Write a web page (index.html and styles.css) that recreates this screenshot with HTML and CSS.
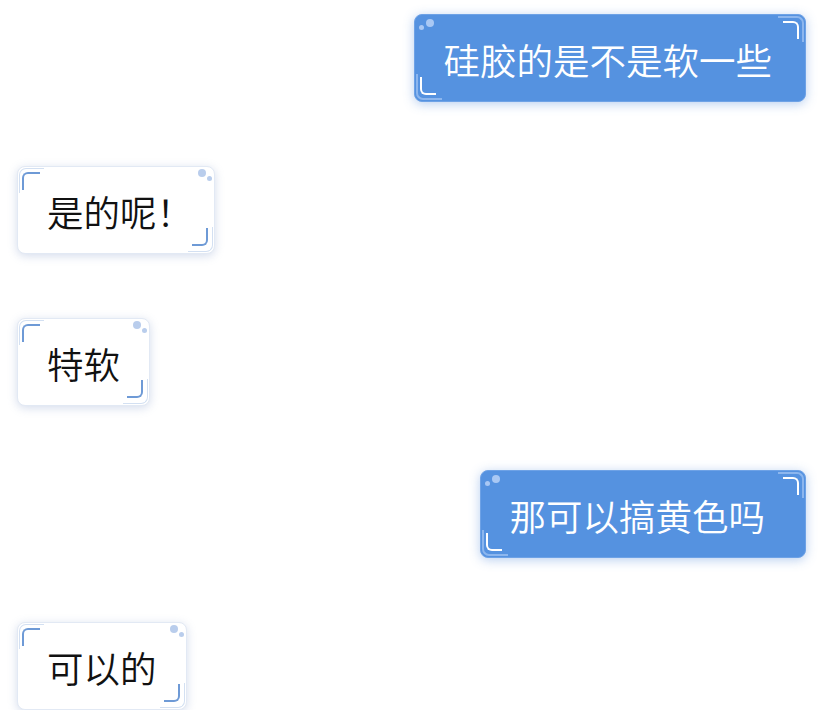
FILE: index.html
```html
<!DOCTYPE html>
<html lang="zh-CN">
<head>
<meta charset="utf-8">
<link rel="stylesheet" href="styles.css">
</head>
<body>
<div class="chat">
  <div class="bubble me long"><span class="txt">硅胶的是不是软一些</span><i class="dot big"></i><i class="dot small"></i><i class="br a"></i><i class="br b"></i><i class="ln a"></i><i class="ln b"></i></div>
  <div class="bubble them tight"><span class="txt">是的呢！</span><i class="dot big"></i><i class="dot small"></i><i class="br a"></i><i class="br b"></i><i class="ln a"></i><i class="ln b"></i></div>
  <div class="bubble them"><span class="txt">特软</span><i class="dot big"></i><i class="dot small"></i><i class="br a"></i><i class="br b"></i><i class="ln a"></i><i class="ln b"></i></div>
  <div class="bubble me wide"><span class="txt">那可以搞黄色吗</span><i class="dot big"></i><i class="dot small"></i><i class="br a"></i><i class="br b"></i><i class="ln a"></i><i class="ln b"></i></div>
  <div class="bubble them"><span class="txt">可以的</span><i class="dot big"></i><i class="dot small"></i><i class="br a"></i><i class="br b"></i><i class="ln a"></i><i class="ln b"></i></div>
</div>
</body>
</html>
```
FILE: styles.css
```css
html, body {
  margin: 0;
  padding: 0;
  background: #ffffff;
}
.chat {
  display: flex;
  flex-direction: column;
  gap: 64px;
  padding: 14px 14px 0 17px;
  font-family: "Noto Sans CJK SC", "Noto Sans", sans-serif;
}
.bubble {
  position: relative;
  box-sizing: border-box;
  height: 88px;
  display: flex;
  align-items: center;
  padding: 0 29px;
  border-radius: 8px;
  font-size: 36.5px;
  font-weight: 350;
  line-height: 1;
}
.bubble.tight { padding-right: 21px; }
.bubble.wide { padding-right: 40px; }
.bubble.long { padding-right: 33px; }
.txt {
  position: relative;
  top: 2px;
}
.them {
  align-self: flex-start;
  background: #ffffff;
  color: #111111;
  border: 1px solid #e2e9f4;
  box-shadow: 0 2px 10px rgba(120, 145, 195, 0.32);
}
.me {
  align-self: flex-end;
  background: #5592e0;
  color: #ffffff;
  border: 1px solid #6ea2e6;
  box-shadow: 0 2px 11px rgba(85, 140, 220, 0.42);
}
.dot {
  position: absolute;
  border-radius: 50%;
}
.dot.big { width: 8px; height: 8px; }
.dot.small { width: 5px; height: 5px; }
.them .dot { background: #b9cdec; }
.them .dot.big { top: 2px; right: 8px; }
.them .dot.small { top: 9px; right: 2px; }
.me .dot { background: #a9c8f4; }
.me .dot.big { top: 4px; left: 11px; }
.me .dot.small { top: 10px; left: 4px; }

.br {
  position: absolute;
  width: 16px;
  height: 16px;
  border: 0 solid;
}
.them .br { border-color: #6e9ad6; }
.them .br.a {
  top: 5px; left: 4px; width: 16px;
  border-top-width: 2px; border-left-width: 2px;
  border-top-left-radius: 6px;
}
.them .br.b {
  bottom: 7px; right: 6px; width: 14px;
  border-bottom-width: 2px; border-right-width: 2px;
  border-bottom-right-radius: 6px;
}
.me .br { border-color: #ffffff; }
.me .br.a {
  top: 6px; right: 6px; width: 14px;
  border-top-width: 2px; border-right-width: 2px;
  border-top-right-radius: 6px;
}
.me .br.b {
  bottom: 6px; left: 5px; width: 14px;
  border-bottom-width: 2px; border-left-width: 2px;
  border-bottom-left-radius: 6px;
}
.ln {
  position: absolute;
  width: 24px;
  height: 24px;
  border: 0 solid;
}
.them .ln { border-color: #d3e0f2; }
.them .ln.a {
  top: 1px; left: 1px;
  border-top-width: 1.5px; border-left-width: 1.5px;
  border-top-left-radius: 7px;
}
.them .ln.b {
  bottom: 1px; right: 1px;
  border-bottom-width: 1.5px; border-right-width: 1.5px;
  border-bottom-right-radius: 7px;
}
.me .ln { border-color: #8cb6ee; }
.me .ln.a {
  top: 1px; right: 1px;
  border-top-width: 2px; border-right-width: 2px;
  border-top-right-radius: 7px;
}
.me .ln.b {
  bottom: 1px; left: 1px;
  border-bottom-width: 2px; border-left-width: 2px;
  border-bottom-left-radius: 7px;
}
```
